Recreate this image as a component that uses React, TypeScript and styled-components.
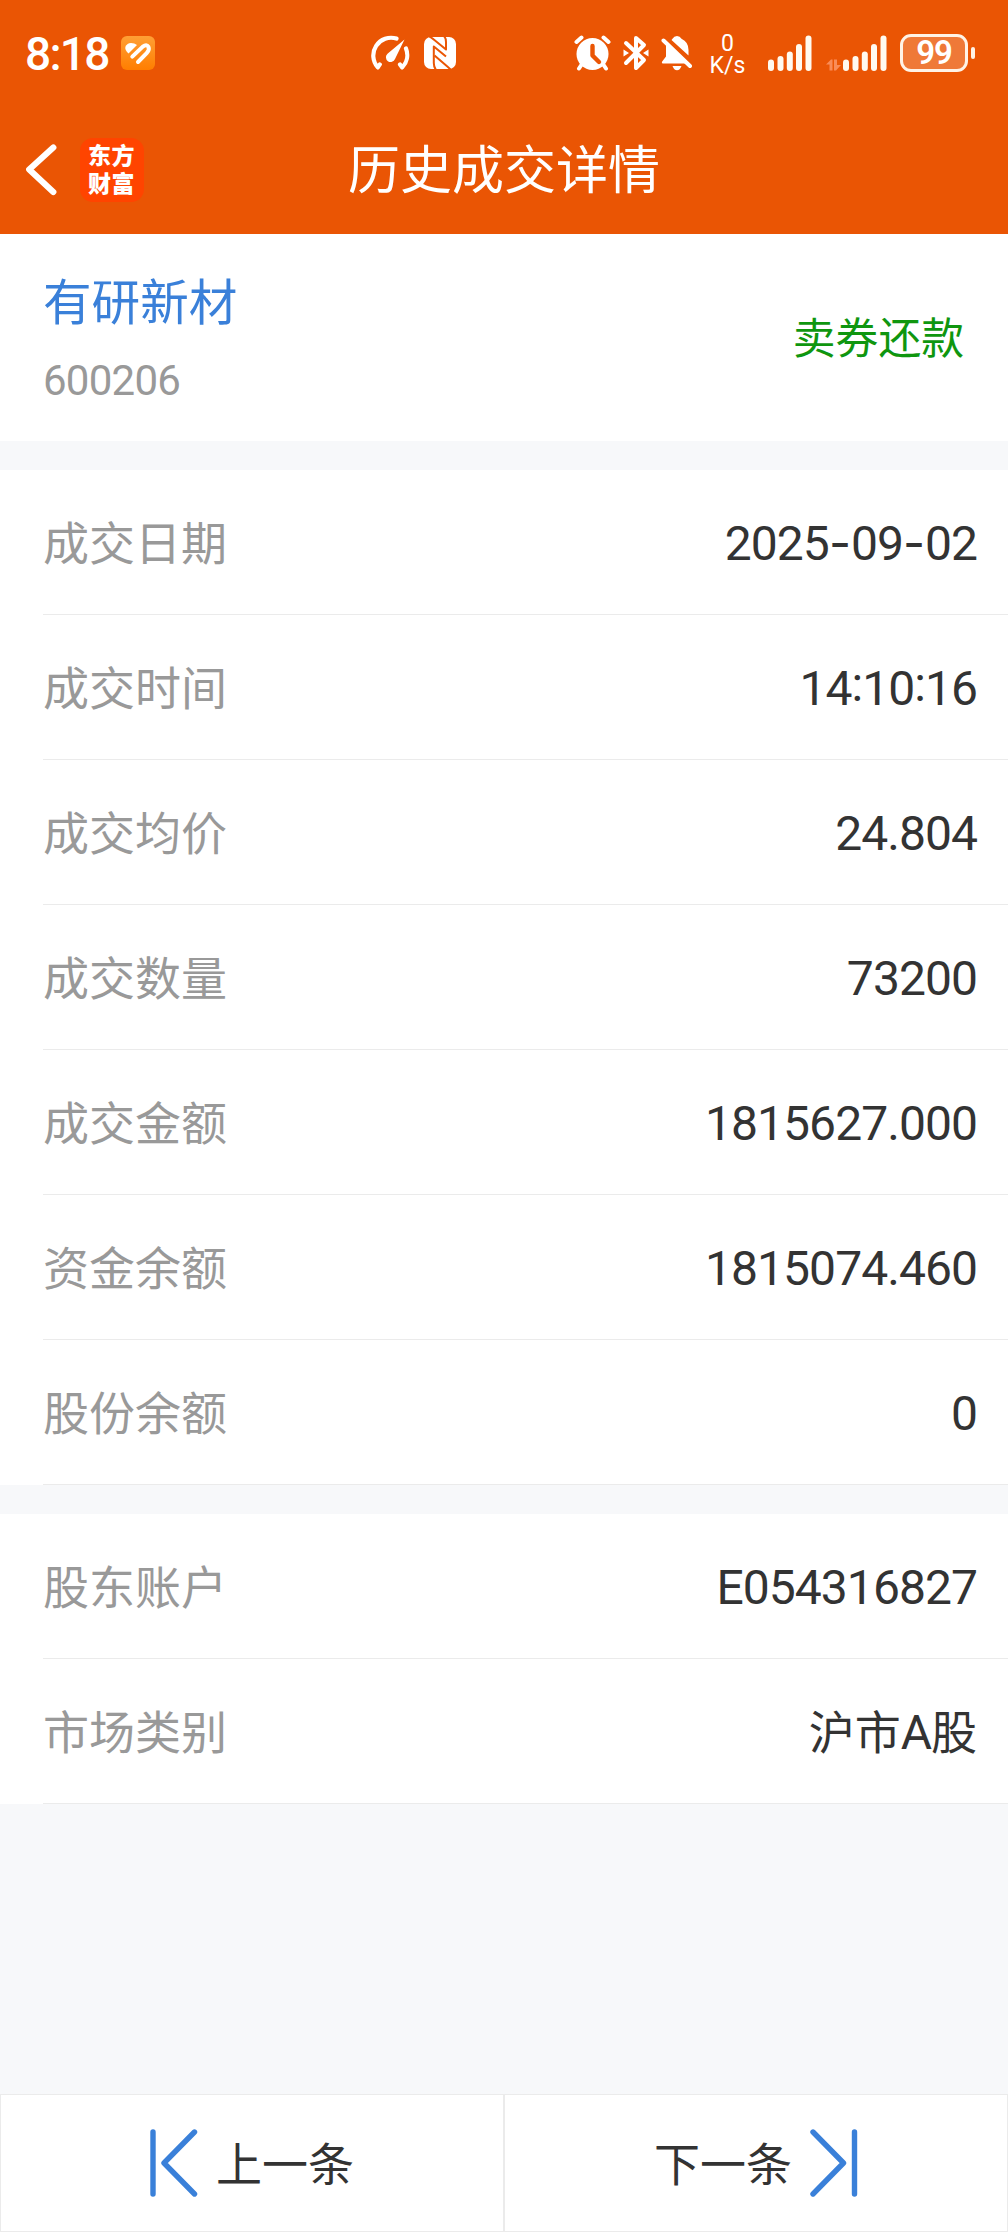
import React from "react";
import styled, { createGlobalStyle } from "styled-components";

const cjk = `"Noto Sans CJK SC", sans-serif`;
const latin = `Roboto, "Noto Sans CJK SC", sans-serif`;

const GlobalStyle = createGlobalStyle`
  * { box-sizing: border-box; }
  body { margin: 0; background: #f7f8fa; }
`;

const Page = styled.div`
  display: flex;
  flex-direction: column;
  width: 1008px;
  height: 2232px;
  background: #f7f8fa;
  font-family: ${cjk};
  color: #333;
`;

const Header = styled.header`
  height: 234px;
  background: #ea5504;
  color: #fff;
`;

const StatusBar = styled.div`
  display: grid;
  grid-template-columns: 343px 204px 1fr;
  align-items: center;
  height: 106px;
  padding-left: 27px;
  font-family: ${latin};
`;

const StatusGroup = styled.div<{ $gap: number }>`
  display: flex;
  align-items: center;
  gap: ${(p) => p.$gap}px;
`;

const Clock = styled.span`
  width: 82px;
  margin-left: -2px;
  padding-top: 2px;
  font-size: 46px;
  font-weight: 500;
  line-height: 50px;
  white-space: nowrap;
  letter-spacing: -1.7px;
`;

const NetSpeed = styled.div`
  display: flex;
  flex-direction: column;
  align-items: center;
  gap: 1px;
  width: 35px;
  margin-left: 17px;
  padding-top: 2px;
  font-size: 23px;
  font-weight: 400;
  line-height: 21px;
  white-space: nowrap;
`;

const Signal = styled.div<{ $left: number }>`
  display: flex;
  margin-left: ${(p) => p.$left}px;
`;

const Battery = styled.div`
  display: flex;
  align-items: center;
  gap: 3px;
  margin-left: 13px;
`;

const BatteryBody = styled.div`
  display: flex;
  align-items: center;
  justify-content: center;
  width: 68px;
  height: 38px;
  border: 3px solid #fff3e6;
  border-radius: 11px;
  background: #ef7938;
  font-size: 33px;
  font-weight: 600;
  line-height: 32px;
  letter-spacing: -1px;
`;

const BatteryTip = styled.div`
  width: 4px;
  height: 12px;
  border-radius: 2px;
  background: #fff3e6;
`;

const NavBar = styled.nav`
  display: grid;
  grid-template-columns: 1fr auto 1fr;
  align-items: center;
  height: 128px;
  padding: 0 26px;
`;

const NavStart = styled.div`
  display: flex;
  align-items: center;
  gap: 22px;
`;

const Logo = styled.div`
  display: flex;
  flex-direction: column;
  width: 64px;
  height: 64px;
  padding: 2px 0 0 8px;
  border-radius: 13px;
  background: #ff4400;
  font-size: 23px;
  font-weight: 900;
  line-height: 28px;
  letter-spacing: 0.4px;
`;

const Title = styled.h1`
  margin: 0;
  padding-bottom: 6px;
  font-size: 52px;
  font-weight: 400;
  line-height: 70px;
`;

const Summary = styled.section`
  display: flex;
  align-items: center;
  justify-content: space-between;
  height: 207px;
  padding: 0 44px 0 43px;
  background: #fff;
`;

const StockName = styled.div`
  font-size: 48.6px;
  line-height: 70px;
  color: #3a80d9;
`;

const StockCode = styled.div`
  margin-top: 17px;
  font-family: ${latin};
  font-size: 42px;
  line-height: 60px;
  letter-spacing: -0.75px;
  color: #999;
`;

const TradeType = styled.div`
  padding-bottom: 6px;
  font-size: 42.8px;
  line-height: 60px;
  color: #0f960f;
`;

const Group = styled.section`
  margin-top: 29px;
  background: #fff;
`;

const Row = styled.div`
  display: flex;
  align-items: center;
  justify-content: space-between;
  height: 145px;
  margin-left: 43px;
  padding-right: 31px;
  border-bottom: 1px solid #ebebeb;
`;

const Label = styled.span`
  padding-bottom: 5px;
  font-size: 46px;
  line-height: 66px;
  color: #999;
`;

const Value = styled.span`
  display: flex;
  align-items: baseline;
  padding-top: 3px;
  font-family: ${latin};
  font-size: 48px;
  line-height: 66px;
  letter-spacing: -0.95px;
`;

const Dash = styled.span`
  width: 22px;
  font-family: Inter, sans-serif;
  text-align: center;
  letter-spacing: 0;
`;

const Colon = styled.span`
  transform: translateY(-4px);
`;

const Hanzi = styled.span`
  font-family: ${cjk};
  font-size: 46px;
  line-height: 60px;
  letter-spacing: 0;
`;

const Footer = styled.footer`
  display: grid;
  grid-template-columns: 1fr 1fr;
  height: 138px;
  margin-top: auto;
`;

const PagerButton = styled.button`
  display: flex;
  align-items: center;
  justify-content: center;
  gap: 18px;
  padding: 0;
  border: 1px solid #ebebeb;
  background: #fff;
  color: #333;
`;

const PagerText = styled.span`
  padding-bottom: 4px;
  font-family: ${cjk};
  font-size: 46px;
  line-height: 66px;
`;

const HeartBadge = () => (
  <svg width="34" height="34" viewBox="0 0 34 34">
    <defs>
      <linearGradient id="badge" x1="0" y1="0" x2="0" y2="1">
        <stop offset="0" stopColor="#ff9f35" />
        <stop offset="1" stopColor="#ff7e00" />
      </linearGradient>
    </defs>
    <rect width="34" height="34" rx="6" fill="url(#badge)" />
    <path d="M7.5 17.6 Q3.6 14 4.4 10.8 Q6 7 10 7 Q13.5 7 16 9 Z" fill="#fff" />
    <path d="M11.3 20.6 L21.8 10.6 Q25.6 7.8 27.4 10.8 Q28.8 14 25.9 16.8 L17 26" fill="none" stroke="#fff" strokeWidth="4" strokeLinecap="round" strokeLinejoin="round" />
  </svg>
);

const GaugeIcon = () => (
  <svg width="40" height="36" viewBox="0 0 40 36">
    <g fill="none" stroke="#fff" strokeWidth="4.2" strokeLinecap="round" strokeLinejoin="round">
      <path d="M26.5 3.6 A17.8 17.8 0 0 0 7.8 32.4 L9.8 29.4" />
      <path d="M36 13.5 A17.8 17.8 0 0 1 32.2 32.4 L30 29.4" />
    </g>
    <path d="M34.5 4.5 L25 24 A4.7 4.7 0 1 1 17.5 18.8 Z" fill="#fff" />
  </svg>
);

const NfcIcon = () => (
  <svg width="32" height="34" viewBox="0 0 32 34">
    <rect y="1" width="32" height="32" rx="7" fill="#fff" />
    <g fill="none" stroke="#ea5504" strokeWidth="2" strokeLinejoin="round">
      <path d="M5.5 0.5 Q8.5 2.5 11 4.5 L22 13.5 V6 Q22 2 20 0" />
      <path d="M12 34 Q9.8 31 9.8 27 V10.5 L22 20.5" />
      <path d="M10.5 19.5 L21 28.5 Q24 31 26.5 33.5" />
    </g>
  </svg>
);

const AlarmIcon = () => (
  <svg width="37" height="36" viewBox="0 0 37 36">
    <circle cx="18.5" cy="19" r="16" fill="#fff" />
    <g stroke="#fff" strokeWidth="4" strokeLinecap="round">
      <path d="M2.5 7 L7.5 2.5 M34.5 7 L29.5 2.5" />
      <path d="M8 29 L5 33.5 M29 29 L32 33.5" />
    </g>
    <path d="M18.5 11 V20.5 L25 27" fill="none" stroke="#ea5504" strokeWidth="4.4" strokeLinecap="round" strokeLinejoin="round" />
  </svg>
);

const BluetoothIcon = () => (
  <svg width="26" height="36" viewBox="0 0 26 36">
    <path d="M3 8 L21 25 L13 33 V21 M13 15 V3 L21 10 L3 28" fill="none" stroke="#fff" strokeWidth="4" strokeLinecap="round" strokeLinejoin="round" />
    <path d="M0.5 14.5 L6 18 L0.5 21.5 Z M25.5 14.5 L20 18 L25.5 21.5 Z" fill="#fff" />
  </svg>
);

const MutedBellIcon = () => (
  <svg width="32" height="36" viewBox="0 0 32 36">
    <path d="M11.5 3.8 Q13 1 16 1 Q19 1 20.5 3.8 Q27.5 7 27.5 15 V20.5 L10.5 5 Z" fill="#fff" />
    <path d="M5 9 L25 28.5 H1.5 Q0.5 28 1 26.8 L5 21.5 Z" fill="#fff" />
    <path d="M2.5 5.5 L29 31" stroke="#fff" strokeWidth="4" strokeLinecap="round" />
    <path d="M11.5 31 H20.5 Q19 35.2 16 35.2 Q13 35.2 11.5 31 Z" fill="#fff" />
  </svg>
);

const SignalBars = () => (
  <svg width="44" height="36" viewBox="0 0 44 36" fill="#fffaf0">
    <rect x="0" y="24.5" width="6" height="11.5" rx="3" />
    <rect x="9.5" y="21" width="6" height="15" rx="3" />
    <rect x="18.8" y="16.5" width="6" height="19.5" rx="3" />
    <rect x="28" y="9" width="6" height="27" rx="3" />
    <rect x="37.5" y="0.5" width="6" height="35.5" rx="3" />
  </svg>
);

const DataArrows = () => (
  <svg width="17" height="36" viewBox="0 0 17 36" fill="#f98c58">
    <path d="M0 29.5 L5 24.5 H6.5 V35.5 H3.5 V29.5 Z" />
    <path d="M8 24.5 H11 V30 H15 L10 35.5 H8 Z" />
  </svg>
);

const BackIcon = () => (
  <svg width="32" height="54" viewBox="0 0 32 54">
    <path d="M27.3 4.5 L3.2 26.5 L27.3 49" fill="none" stroke="#fff" strokeWidth="6.2" strokeLinecap="round" strokeLinejoin="round" />
  </svg>
);

const PrevIcon = () => (
  <svg width="48" height="68" viewBox="0 0 48 68" fill="none" stroke="#3a80d9" strokeWidth="5.4" strokeLinecap="round" strokeLinejoin="round">
    <path d="M3 3 V65 M44.5 3 L14 34 L44.5 65" />
  </svg>
);

const NextIcon = () => (
  <svg width="48" height="68" viewBox="0 0 48 68" fill="none" stroke="#3a80d9" strokeWidth="5.4" strokeLinecap="round" strokeLinejoin="round">
    <path d="M44.5 3 V65 M3 3 L33.5 34 L3 65" />
  </svg>
);

const tradeRows = [
  ["成交日期", "2025-09-02"],
  ["成交时间", "14:10:16"],
  ["成交均价", "24.804"],
  ["成交数量", "73200"],
  ["成交金额", "1815627.000"],
  ["资金余额", "1815074.460"],
  ["股份余额", "0"],
];

const accountRows = [
  ["股东账户", "E054316827"],
  ["市场类别", "沪市A股"],
];

const renderValue = (value: string) =>
  value.split(/([-:]|[\u4e00-\u9fff]+)/).filter(Boolean).map((part, i) => {
    if (part === "-") return <Dash key={i}>{part}</Dash>;
    if (part === ":") return <Colon key={i}>{part}</Colon>;
    if (/[\u4e00-\u9fff]/.test(part)) return <Hanzi key={i}>{part}</Hanzi>;
    return <span key={i}>{part}</span>;
  });

const Rows = ({ items }: { items: string[][] }) => (
  <Group>
    {items.map(([label, value]) => (
      <Row key={label}>
        <Label>{label}</Label>
        <Value>{renderValue(value)}</Value>
      </Row>
    ))}
  </Group>
);

export default function App() {
  return (
    <Page>
      <GlobalStyle />
      <Header>
        <StatusBar>
          <StatusGroup $gap={14}>
            <Clock>8:18</Clock>
            <HeartBadge />
          </StatusGroup>
          <StatusGroup $gap={14}>
            <GaugeIcon />
            <NfcIcon />
          </StatusGroup>
          <StatusGroup $gap={0}>
            <StatusGroup $gap={12}>
              <AlarmIcon />
              <BluetoothIcon />
              <MutedBellIcon />
            </StatusGroup>
            <NetSpeed>
              <span>0</span>
              <span>K/s</span>
            </NetSpeed>
            <Signal $left={23}>
              <SignalBars />
            </Signal>
            <Signal $left={14}>
              <DataArrows />
              <SignalBars />
            </Signal>
            <Battery>
              <BatteryBody>99</BatteryBody>
              <BatteryTip />
            </Battery>
          </StatusGroup>
        </StatusBar>
        <NavBar>
          <NavStart>
            <BackIcon />
            <Logo>
              <span>东方</span>
              <span>财富</span>
            </Logo>
          </NavStart>
          <Title>历史成交详情</Title>
        </NavBar>
      </Header>
      <Summary>
        <div>
          <StockName>有研新材</StockName>
          <StockCode>600206</StockCode>
        </div>
        <TradeType>卖券还款</TradeType>
      </Summary>
      <Rows items={tradeRows} />
      <Rows items={accountRows} />
      <Footer>
        <PagerButton>
          <PrevIcon />
          <PagerText>上一条</PagerText>
        </PagerButton>
        <PagerButton>
          <PagerText>下一条</PagerText>
          <NextIcon />
        </PagerButton>
      </Footer>
    </Page>
  );
}
